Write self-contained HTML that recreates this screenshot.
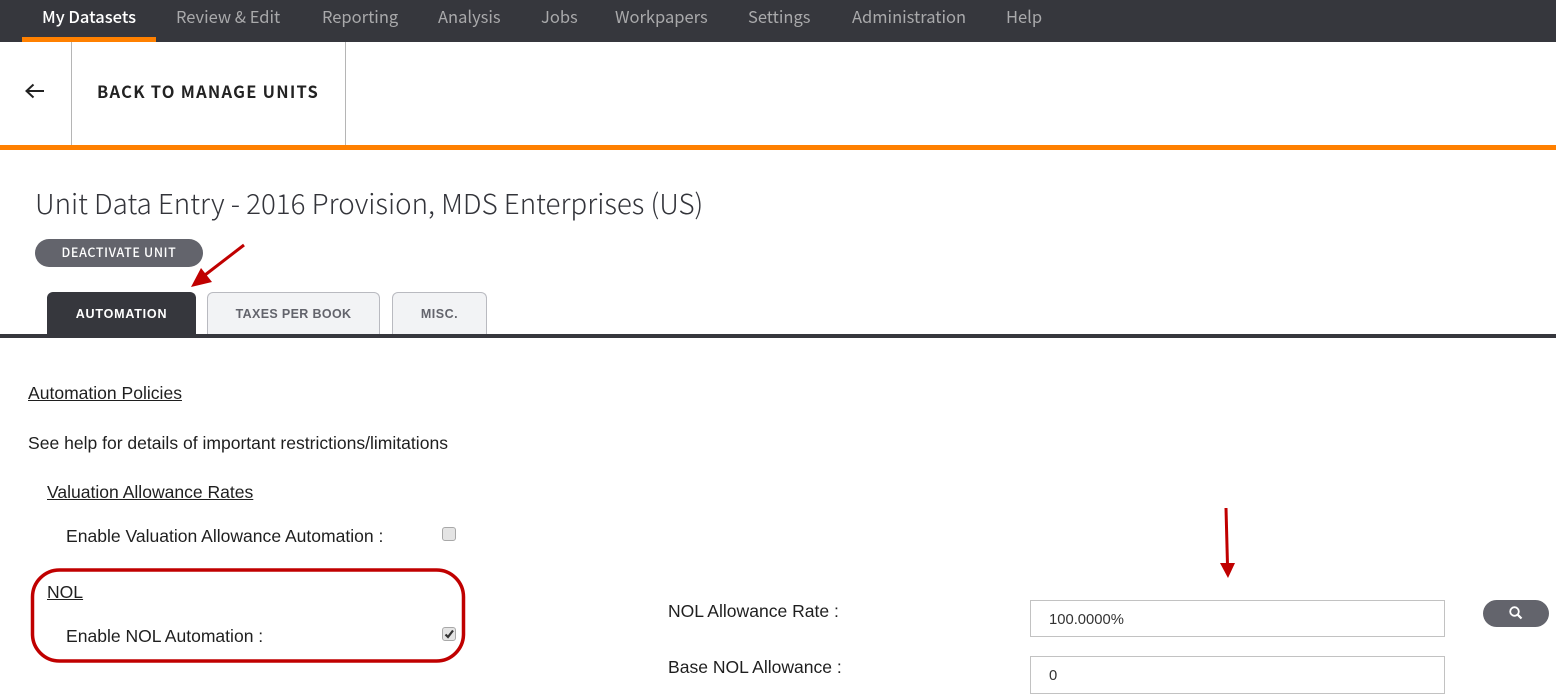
<!DOCTYPE html>
<html lang="en"><head><meta charset="utf-8"><title>Unit Data Entry</title>
<style>
html,body{margin:0;padding:0;background:#fff;}
body{width:1556px;height:698px;overflow:hidden;position:relative;font-family:"Liberation Sans",sans-serif;}
.a{position:absolute;white-space:nowrap;}
.n{font-family:"Noto Sans CJK JP","Liberation Sans",sans-serif;font-size:16.5px;line-height:20px;top:6px;color:#a9a9ab;}
.s{font-size:17.55px;line-height:20px;color:#1f1f1f;}
.u{text-decoration:underline;}
.h{font-family:"Noto Sans CJK JP","Liberation Sans",sans-serif;}
.cb{position:absolute;width:12px;height:12px;border:1px solid #a8a8a8;border-radius:3px;background:#e4e4e4;}
.inp{position:absolute;left:1030px;width:413px;border:1px solid #c2c2c2;background:#fff;font-size:14.8px;line-height:20px;color:#333;}
.tab{position:absolute;top:292px;height:42px;box-sizing:border-box;background:#f2f3f5;border:1px solid #b9bac0;border-bottom:0;border-radius:6px 6px 0 0;color:#63646c;font-family:"Liberation Sans",sans-serif;font-weight:700;font-size:12.5px;letter-spacing:.5px;line-height:43px;text-align:center;}
</style></head><body>
<div class="a" style="left:0;top:0;width:1556px;height:42px;background:#36373d;"></div>
<div class="a" style="left:22px;top:37px;width:134px;height:5px;background:#ff8000;"></div>
<div class="a n" style="left:42px;color:#fff;font-weight:500;">My Datasets</div>
<div class="a n" style="left:176px;">Review &amp; Edit</div>
<div class="a n" style="left:322px;">Reporting</div>
<div class="a n" style="left:438px;">Analysis</div>
<div class="a n" style="left:541px;">Jobs</div>
<div class="a n" style="left:615px;">Workpapers</div>
<div class="a n" style="left:748px;">Settings</div>
<div class="a n" style="left:852px;">Administration</div>
<div class="a n" style="left:1006px;">Help</div>

<div class="a" style="left:71px;top:42px;width:1px;height:103px;background:#b5b5b5;"></div>
<div class="a" style="left:345px;top:42px;width:1px;height:103px;background:#b5b5b5;"></div>
<svg class="a" style="left:24px;top:82px;" width="22" height="18" viewBox="0 0 22 18"><path d="M2 9H20M9.500 2.500L2.500 9L9.500 15.500" fill="none" stroke="#222" stroke-width="2"/></svg>
<div class="a h" style="left:97px;top:81px;font-size:16.5px;line-height:20px;font-weight:700;letter-spacing:1.25px;color:#222;">BACK TO MANAGE UNITS</div>
<div class="a" style="left:0;top:145px;width:1556px;height:5px;background:#ff8000;"></div>

<div class="a h" style="left:35px;top:184px;font-size:27.75px;line-height:36px;font-weight:300;color:#33343a;">Unit Data Entry - 2016 Provision, MDS Enterprises (US)</div>
<div class="a h" style="left:35px;top:239px;width:168px;height:28px;border-radius:14px;background:#63646c;color:#fff;font-size:12.5px;line-height:26px;letter-spacing:.65px;font-weight:500;text-align:center;">DEACTIVATE UNIT</div>

<div class="tab" style="left:47px;width:149px;background:#36373d;border-color:#36373d;color:#fff;letter-spacing:.8px;">AUTOMATION</div>
<div class="tab" style="left:207px;width:173px;letter-spacing:.35px;">TAXES PER BOOK</div>
<div class="tab" style="left:392px;width:95px;">MISC.</div>
<div class="a" style="left:0;top:334px;width:1556px;height:4px;background:#36373d;"></div>

<svg class="a" style="left:0;top:0;pointer-events:none;" width="1556" height="698" viewBox="0 0 1556 698">
<path d="M244 245L205 275" stroke="#c00000" stroke-width="3" fill="none"/>
<path d="M191 287L201 268L212 282Z" fill="#c00000"/>
<path d="M1226 508L1227.500 565" stroke="#c00000" stroke-width="3" fill="none"/>
<path d="M1220 563H1235L1228 578Z" fill="#c00000"/>
<rect x="32.500" y="570" width="431" height="91" rx="27" ry="27" fill="none" stroke="#c00000" stroke-width="3.5"/>
</svg>

<div class="a s u" style="left:28px;top:383px;">Automation Policies</div>
<div class="a s" style="left:28px;top:433px;">See help for details of important restrictions/limitations</div>
<div class="a s u" style="left:47px;top:482px;">Valuation Allowance Rates</div>
<div class="a s" style="left:66px;top:526px;">Enable Valuation Allowance Automation :</div>
<div class="cb" style="left:442px;top:527px;"></div>
<div class="a s u" style="left:47px;top:582px;">NOL</div>
<div class="a s" style="left:66px;top:626px;">Enable NOL Automation :</div>
<div class="cb" style="left:442px;top:627px;"><svg style="position:absolute;left:0;top:0;" width="12" height="12" viewBox="0 0 12 12"><path d="M2.500 6.500L5 9L10 2.500" fill="none" stroke="#333" stroke-width="2.200"/></svg></div>

<div class="a s" style="left:668px;top:601px;">NOL Allowance Rate :</div>
<div class="a s" style="left:668px;top:657px;">Base NOL Allowance :</div>
<div class="inp" style="top:600px;height:35px;"><span class="a" style="left:18px;top:9px;">100.0000%</span></div>
<div class="inp" style="top:656px;height:36px;"><span class="a" style="left:18px;top:9px;">0</span></div>
<div class="a" style="left:1483px;top:600px;width:66px;height:27px;border-radius:14px;background:#63646c;"></div>
<svg class="a" style="left:1508px;top:605px;" width="16" height="16" viewBox="0 0 16 16"><circle cx="6.500" cy="6.500" r="4.300" fill="none" stroke="#fff" stroke-width="1.800"/><path d="M9.800 9.800L13.500 13.500" stroke="#fff" stroke-width="2.200"/></svg>
</body></html>
